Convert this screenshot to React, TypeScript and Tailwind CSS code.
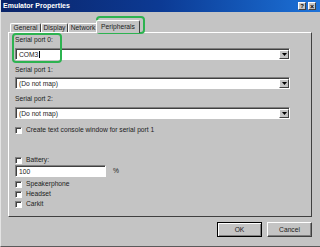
import React from "react";

const font = { fontFamily: '"Liberation Sans", Arial, sans-serif' };

function Combo({ value, caret }: { value: string; caret?: boolean }) {
  return (
    <div className="flex h-[12px] w-[275px] border border-t-[#808080] border-l-[#808080] border-b-white border-r-white bg-white shadow-[inset_1px_1px_0_#404040]">
      <div className="flex flex-1 items-center pl-[3px] pt-[1px] text-[6.7px] leading-[8px] text-[#222]">
        {value}
        {caret && <span className="ml-[1px] h-[7px] w-px bg-black" />}
      </div>
      <div className="mt-[1px] flex w-[10px] items-center justify-center border border-t-white border-l-white border-b-[#404040] border-r-[#404040] bg-[#c4c4c4]">
        <svg width="5" height="3" viewBox="0 0 5 3">
          <path d="M0 0h5L2.5 3z" fill="#000" />
        </svg>
      </div>
    </div>
  );
}

function Check({ label, className = "" }: { label: string; className?: string }) {
  return (
    <div className={`flex h-[8px] items-center gap-[4px] ${className}`}>
      <div className="h-[7px] w-[7px] border border-t-[#808080] border-l-[#808080] border-b-white border-r-white bg-white shadow-[inset_1px_1px_0_#404040]" />
      <span className="text-[6.7px] leading-[8px] text-[#222]">{label}</span>
    </div>
  );
}

function Tab({ label, active, className = "" }: { label: string; active?: boolean; className?: string }) {
  if (active) {
    return (
      <div className={`relative z-10 -mb-px flex h-[13px] items-center justify-center rounded-t-[2px] border border-b-0 border-t-white border-l-white border-r-[#404040] bg-[#c4c4c4] text-[6.7px] leading-[8px] text-[#222] ${className}`}>
        {label}
      </div>
    );
  }
  return (
    <div className={`flex h-[9px] items-center justify-center rounded-t-[2px] border border-b-0 border-t-white border-l-white border-r-[#404040] bg-[#c4c4c4] text-[6.7px] leading-[8px] text-[#222] ${className}`}>
      {label}
    </div>
  );
}

export default function App() {
  return (
    <div style={font} className="relative h-[247px] w-[320px] overflow-hidden bg-[#c4c4c4]">
      <div className="flex h-[247px] flex-col border-l border-b border-l-[#e4e4e4] border-b-[#5a5a5a]">
        {/* title bar */}
        <div className="flex h-[12px] items-center justify-between bg-gradient-to-r from-[#0a2468] via-[#0c3a94] to-[#1d72d8] pl-[2px] pr-[4px]">
          <span className="text-[7px] font-bold leading-[8px] text-white">Emulator Properties</span>
          <div className="flex gap-[2px]">
            <div className="flex h-[8px] w-[8px] items-center justify-center border border-t-white border-l-white border-b-[#404040] border-r-[#404040] bg-[#c4c4c4] text-[6px] font-bold leading-none text-black">?</div>
            <div className="flex h-[8px] w-[8px] items-center justify-center border border-t-white border-l-white border-b-[#404040] border-r-[#404040] bg-[#c4c4c4] text-[7px] font-bold leading-none text-black">×</div>
          </div>
        </div>

        {/* tabs */}
        <div className="mt-[8px] flex h-[12px] items-end pl-[9px]">
          <Tab label="General" className="w-[31px]" />
          <Tab label="Display" className="w-[27px]" />
          <Tab label="Network" className="w-[30px]" />
          <Tab label="Peripherals" active className="-ml-[2px] w-[44px]" />
        </div>

        {/* panel */}
        <div className="ml-[7px] flex h-[185px] w-[304px] flex-col border border-t-white border-l-white border-b-[#404040] border-r-[#404040] pl-[6px] pt-[3px]">
          <div className="text-[6.7px] leading-[8px] text-[#222]">Serial port 0:</div>
          <div className="mt-[4px]">
            <Combo value="COM3" caret />
          </div>
          <div className="mt-[6px] text-[6.7px] leading-[8px] text-[#222]">Serial port 1:</div>
          <div className="mt-[3px]">
            <Combo value="(Do not map)" />
          </div>
          <div className="mt-[6px] text-[6.7px] leading-[8px] text-[#222]">Serial port 2:</div>
          <div className="mt-[4px]">
            <Combo value="(Do not map)" />
          </div>
          <Check label="Create text console window for serial port 1" className="mt-[7px]" />
          <Check label="Battery:" className="mt-[22px]" />
          <div className="mt-[1px] flex items-center gap-[7px]">
            <div className="flex h-[12px] w-[91px] items-center border border-t-[#808080] border-l-[#808080] border-b-white border-r-white bg-white pl-[3px] pt-[1px] text-[6.7px] leading-[8px] text-[#222] shadow-[inset_1px_1px_0_#404040]">
              100
            </div>
            <span className="text-[6.7px] leading-[8px] text-[#222]">%</span>
          </div>
          <Check label="Speakerphone" className="mt-[3px]" />
          <Check label="Headset" className="mt-[2px]" />
          <Check label="Carkit" className="mt-[2px]" />
        </div>

        {/* buttons */}
        <div className="ml-[7px] mt-[5px] flex w-[304px] justify-end gap-[5px]">
          <button className="flex h-[15px] w-[45px] items-center justify-center border border-black bg-[#c4c4c4] text-[6.7px] leading-[8px] text-[#222] shadow-[inset_1px_1px_0_#fff,inset_-1px_-1px_0_#808080]">
            OK
          </button>
          <button className="flex h-[15px] w-[45px] items-center justify-center border border-t-white border-l-white border-b-[#404040] border-r-[#404040] bg-[#c4c4c4] text-[6.7px] leading-[8px] text-[#222] shadow-[inset_-1px_-1px_0_#808080]">
            Cancel
          </button>
        </div>
      </div>

      {/* green annotations */}
      <div className="absolute left-[96px] top-[16px] h-[18px] w-[49px] rounded-[4px] border-2 border-[#2db350]" />
      <div className="absolute left-[12px] top-[33px] h-[30px] w-[50px] rounded-[4px] border-2 border-[#2db350]" />
    </div>
  );
}
